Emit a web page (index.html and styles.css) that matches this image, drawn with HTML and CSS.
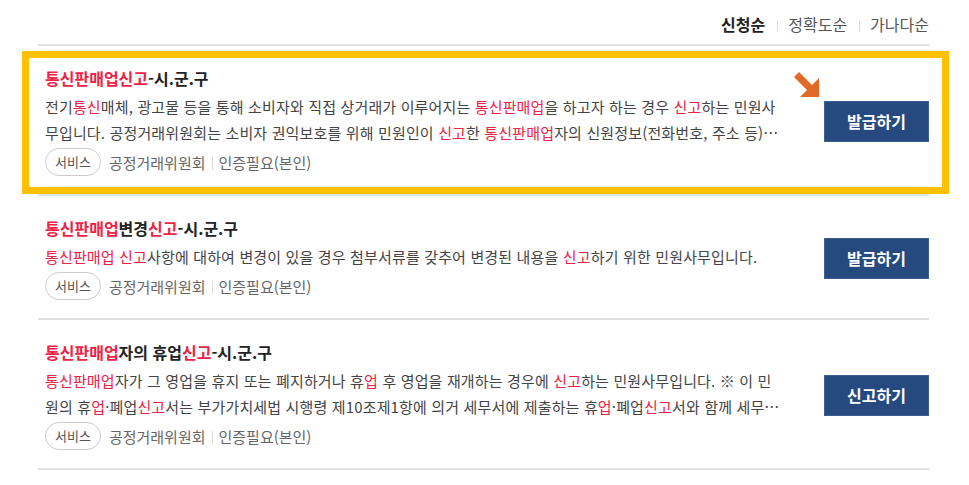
FILE: index.html
```html
<!DOCTYPE html>
<html lang="ko">
<head>
  <meta charset="UTF-8">
  <meta content="width=device-width, initial-scale=1.0" name="viewport">
  <title>민원 검색결과</title>
  <link rel="stylesheet" href="styles.css">
</head>
<body>
<main class="page">
  <nav class="sort">
    <a class="sort-link is-active" href="#">신청순</a>
    <a class="sort-link" href="#">정확도순</a>
    <a class="sort-link" href="#">가나다순</a>
  </nav>

  <ul class="results">
    <li class="result is-highlighted">
      <div class="result-body">
        <h3 class="result-title"><em>통신판매업신고</em>-시.군.구</h3>
        <p class="result-desc">전기<em>통신</em>매체, 광고물 등을 통해 소비자와 직접 상거래가 이루어지는 <em>통신판매업</em>을 하고자 하는 경우 <em>신고</em>하는 민원사무입니다. 공정거래위원회는 소비자 권익보호를 위해 민원인이 <em>신고</em>한 <em>통신판매업</em>자의 신원정보(전화번호, 주소 등)를 공개하고 있습니다.</p>
        <div class="result-meta">
          <span class="tag">서비스</span>
          <span class="meta-item">공정거래위원회</span>
          <span class="meta-item">인증필요(본인)</span>
        </div>
      </div>
      <div class="result-action">
        <svg class="pointer" viewBox="0 0 26 26" width="26" height="26"><path d="M5 0L18 13L25 6V25H6L13 18L0 5Z" fill="#e26a26"/></svg>
        <a class="btn" href="#">발급하기</a>
      </div>
    </li>

    <li class="result">
      <div class="result-body">
        <h3 class="result-title"><em>통신판매업</em>변경<em>신고</em>-시.군.구</h3>
        <p class="result-desc"><em>통신판매업 신고</em>사항에 대하여 변경이 있을 경우 첨부서류를 갖추어 변경된 내용을 <em>신고</em>하기 위한 민원사무입니다.</p>
        <div class="result-meta">
          <span class="tag">서비스</span>
          <span class="meta-item">공정거래위원회</span>
          <span class="meta-item">인증필요(본인)</span>
        </div>
      </div>
      <div class="result-action">
        <a class="btn" href="#">발급하기</a>
      </div>
    </li>

    <li class="result">
      <div class="result-body">
        <h3 class="result-title"><em>통신판매업</em>자의 휴업<em>신고</em>-시.군.구</h3>
        <p class="result-desc"><em>통신판매업</em>자가 그 영업을 휴지 또는 폐지하거나 휴<em>업</em> 후 영업을 재개하는 경우에 <em>신고</em>하는 민원사무입니다. ※ 이 민원의 휴<em>업</em>·폐업<em>신고</em>서는 부가가치세법 시행령 제10조제1항에 의거 세무서에 제출하는 휴<em>업</em>·폐업<em>신고</em>서와 함께 세무서에 제출할 수 있습니다.</p>
        <div class="result-meta">
          <span class="tag">서비스</span>
          <span class="meta-item">공정거래위원회</span>
          <span class="meta-item">인증필요(본인)</span>
        </div>
      </div>
      <div class="result-action">
        <a class="btn" href="#">신고하기</a>
      </div>
    </li>
  </ul>
</main>
</body>
</html>
```

FILE: styles.css
```css
* {
  box-sizing: border-box;
}

body {
  background: #fff;
  color: #222;
  font-family: "Noto Sans CJK KR", "Noto Sans", sans-serif;
  margin: 0;
}

.page {
  padding: 0 40px 0 38px;
}

.sort {
  align-items: center;
  display: flex;
  justify-content: flex-end;
  padding: 14px 0 10px;

  & .sort-link {
    color: #555;
    font-size: 16px;
    line-height: 20px;
    text-decoration: none;
  }

  & .sort-link + .sort-link::before {
    background: #ddd;
    content: "";
    display: inline-block;
    height: 11px;
    margin: 0 10px 0 12px;
    vertical-align: -1px;
    width: 1px;
  }

  & .is-active {
    color: #222;
    font-weight: 700;
  }
}

.results {
  border-top: 2px solid #e1e1e1;
  list-style: none;
  margin: 0;
  padding: 0;
}

.result {
  align-items: center;
  border-bottom: 2px solid #e1e1e1;
  display: flex;
  padding: 21px 0 18px 7px;
  position: relative;

  &.is-highlighted::after {
    border: 7px solid #ffc000;
    bottom: 0;
    content: "";
    left: -16px;
    pointer-events: none;
    position: absolute;
    right: -20px;
    top: 5px;
  }

  & em {
    color: #ec2346;
    font-style: normal;
  }
}

.result-body {
  flex: 1;
  margin-right: 43px;
  min-width: 0;
}

.result-title {
  font-size: 16px;
  font-weight: 700;
  line-height: 22px;
  margin: 0;
}

.result-desc {
  -webkit-box-orient: vertical;
  -webkit-line-clamp: 2;
  color: #444;
  display: -webkit-box;
  font-size: 15px;
  letter-spacing: 0.15px;
  line-height: 26px;
  margin: 5px 0 0;
  overflow: hidden;
}

.result-meta {
  align-items: center;
  display: flex;
  margin-top: 2px;

  & .tag {
    border: 1px solid #ccc;
    border-radius: 14px;
    color: #555;
    font-size: 13px;
    line-height: 26px;
    margin-right: 8px;
    padding: 0 9px;
  }

  & .meta-item {
    color: #666;
    font-size: 15px;
  }

  & .meta-item + .meta-item::before {
    background: #ddd;
    content: "";
    display: inline-block;
    height: 13px;
    margin: 0 6px 0 6px;
    vertical-align: -1px;
    width: 1px;
  }
}

.result-action {
  flex: none;
  position: relative;

  & .pointer {
    left: -30px;
    position: absolute;
    top: -29px;
  }
}

.btn {
  background: #264a7f;
  border: 1px solid #3d5e90;
  color: #fff;
  display: block;
  font-size: 16px;
  font-weight: 700;
  height: 41px;
  line-height: 39px;
  text-align: center;
  text-decoration: none;
  width: 105px;
}
```
